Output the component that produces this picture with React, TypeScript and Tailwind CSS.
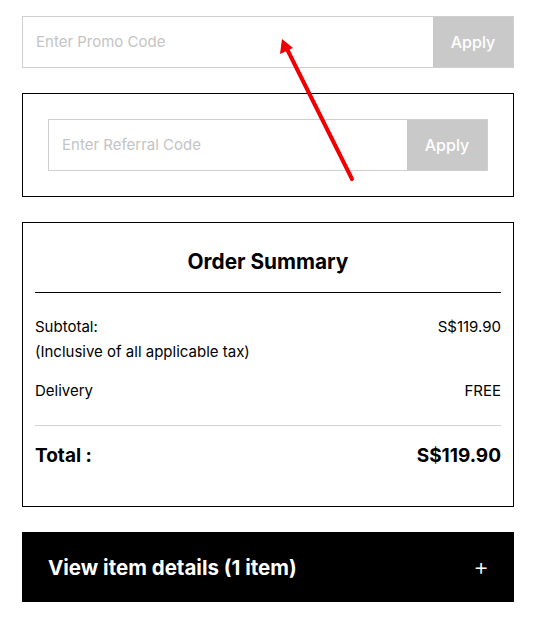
const font = { fontFamily: "Inter, 'Open Sans', sans-serif" };

function CodeField({ placeholder }: { placeholder: string }) {
  return (
    <div className="flex h-[52px] border border-[#cfcfcf] bg-white">
      <input
        className="min-w-0 flex-1 bg-transparent px-[13px] text-[15px] text-black outline-none placeholder:text-[#c4c4c4]"
        placeholder={placeholder}
      />
      <button className="w-[80px] bg-[#c9c9c9] text-[16px] font-medium text-white">
        Apply
      </button>
    </div>
  );
}

function Row({ label, value }: { label: string; value: string }) {
  return (
    <div className="flex items-center justify-between text-[15px] leading-[20px] text-black">
      <span>{label}</span>
      <span>{value}</span>
    </div>
  );
}

export default function App() {
  return (
    <div className="relative min-h-[639px] bg-white px-[22px] pt-[16px]" style={font}>
      <CodeField placeholder="Enter Promo Code" />

      <div className="mt-[25px] h-[104px] border border-black px-[25px] pt-[25px]">
        <CodeField placeholder="Enter Referral Code" />
      </div>

      <div className="mt-[25px] h-[285px] border border-black px-[12px]">
        <h2 className="pt-[24px] text-center text-[20.8px] font-bold leading-[30px] text-black">
          Order Summary
        </h2>
        <div className="mt-[15px] border-t border-black" />
        <div className="pt-[24px]">
          <Row label="Subtotal:" value="S$119.90" />
          <p className="mt-[5px] text-[15px] leading-[20px] text-black">(Inclusive of all applicable tax)</p>
          <div className="mt-[19px]">
            <Row label="Delivery" value="FREE" />
          </div>
        </div>
        <div className="mt-[24px] border-t border-[#d2d2d2]" />
        <div className="flex items-center justify-between pt-[18px] text-[19px] font-bold leading-[24px] text-black">
          <span>Total :</span>
          <span>S$119.90</span>
        </div>
      </div>

      <div className="mt-[25px] flex h-[70px] items-center justify-between bg-black pl-[26px] pr-[25px] text-white">
        <span className="pt-[2px] text-[20.5px] font-bold">View item details (1 item)</span>
        <span className="text-[24px] font-light leading-none">+</span>
      </div>

      <svg
        className="pointer-events-none absolute left-0 top-0"
        width="536"
        height="639"
        viewBox="0 0 536 639"
      >
        <line x1="352" y1="179" x2="287" y2="49" stroke="#f00000" strokeWidth="4" strokeLinecap="round" />
        <polygon points="282,39 280,54 293,48" fill="#f00000" />
      </svg>
    </div>
  );
}
